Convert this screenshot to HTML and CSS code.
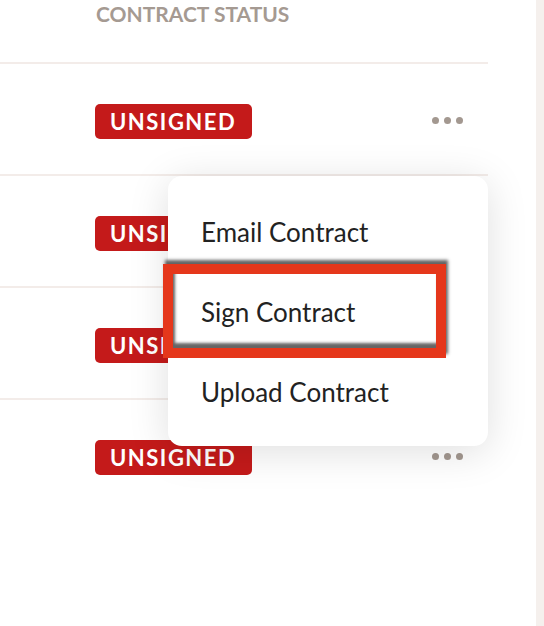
FILE: index.html
```html
<!DOCTYPE html>
<html>
<head>
<meta charset="utf-8">
<link rel="stylesheet" href="styles.css">
</head>
<body>
<div class="page">
  <div class="table">
    <div class="head"><span class="col-title">CONTRACT STATUS</span></div>
    <div class="row"><span class="badge">UNSIGNED</span><span class="dots"><i></i><i></i><i></i></span></div>
    <div class="row"><span class="badge">UNSIGNED</span><span class="dots"><i></i><i></i><i></i></span></div>
    <div class="row"><span class="badge">UNSIGNED</span><span class="dots"><i></i><i></i><i></i></span></div>
    <div class="row last"><span class="badge">UNSIGNED</span><span class="dots"><i></i><i></i><i></i></span></div>
    <div class="menu">
      <div class="item">Email Contract</div>
      <div class="item">Sign Contract</div>
      <div class="item">Upload Contract</div>
      <div class="highlight"></div>
    </div>
  </div>
  <div class="strip"></div>
</div>
</body>
</html>
```
FILE: styles.css
```css
html, body {
  margin: 0;
  padding: 0;
  background: #ffffff;
  font-family: "Lato", "Open Sans", sans-serif;
}
.page {
  display: flex;
  height: 626px;
  overflow: hidden;
}
.table {
  position: relative;
  width: 488px;
  margin-right: 48px;
}
.strip {
  width: 8px;
  background: #f5f0ed;
}
.head {
  height: 62px;
  border-bottom: 2px solid #f3ece9;
  padding-left: 96px;
}
.col-title {
  display: block;
  color: #a59a92;
  font-weight: 700;
  font-size: 21px;
  line-height: 28px;
  margin-top: 0;
}
.row {
  height: 110px;
  border-bottom: 2px solid #f3ece9;
  display: flex;
  align-items: center;
  padding-left: 95px;
  padding-right: 25px;
  justify-content: space-between;
}
.row.last {
  border-bottom: none;
}
.badge {
  background: #c41a1a;
  color: #ffffff;
  font-weight: 700;
  font-size: 22px;
  letter-spacing: 1.5px;
  height: 35px;
  line-height: 35px;
  width: 157px;
  box-sizing: border-box;
  padding-left: 15px;
  border-radius: 5px;
  margin-top: 5px;
}
.dots {
  display: flex;
  gap: 5px;
  margin-top: 2px;
}
.dots i {
  display: block;
  width: 7px;
  height: 7px;
  border-radius: 50%;
  background: #a39890;
}
.menu {
  position: absolute;
  left: 168px;
  top: 176px;
  width: 320px;
  box-sizing: border-box;
  padding: 16px 0 14px;
  background: #ffffff;
  border-radius: 14px;
  box-shadow: 0 6px 40px rgba(0, 0, 0, 0.13);
}
.item {
  height: 80px;
  line-height: 80px;
  padding-left: 33px;
  font-size: 26px;
  color: #222222;
}
.highlight {
  position: absolute;
  left: -5px;
  top: 88px;
  width: 283px;
  height: 94px;
  box-sizing: border-box;
  border: 10px solid #e5371b;
  box-shadow: 2px -4px 3px rgba(50, 50, 50, 0.75), inset 2px -5px 3px rgba(50, 50, 50, 0.75);
}
```
